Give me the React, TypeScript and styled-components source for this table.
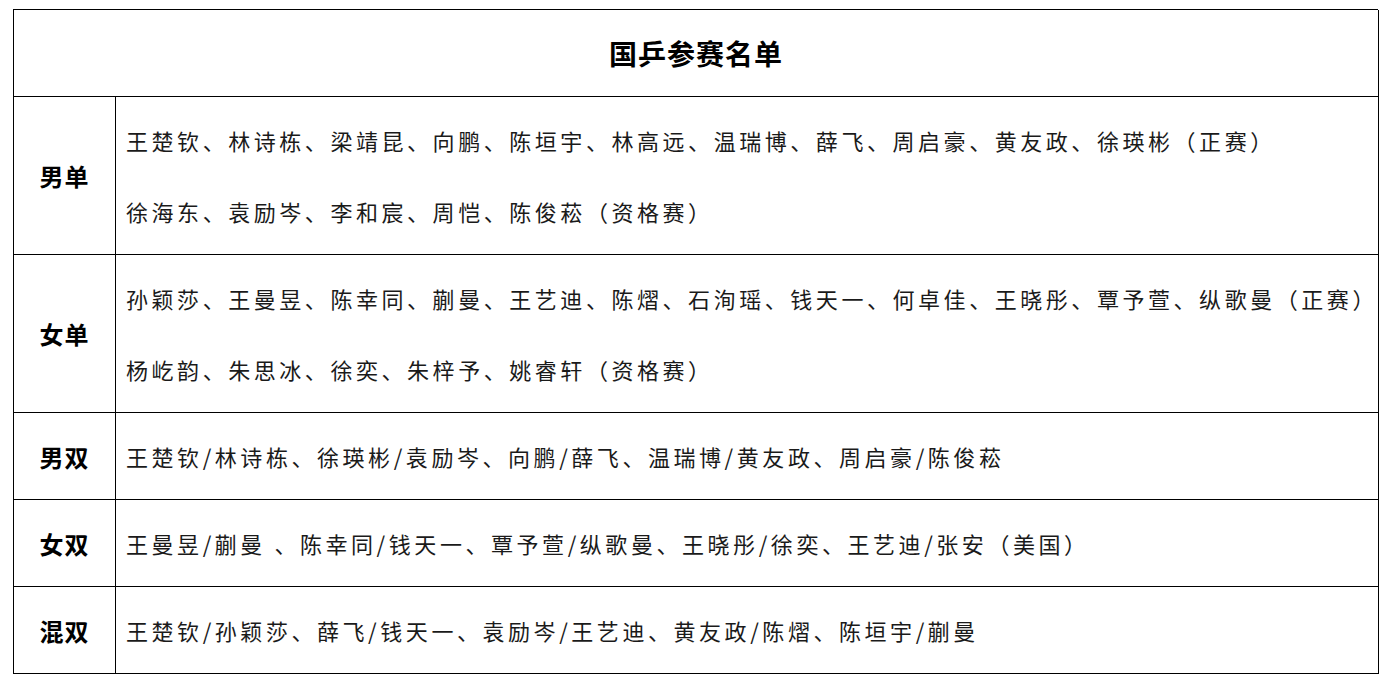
import React from 'react';
import styled, {createGlobalStyle} from 'styled-components';

const GlobalStyle = createGlobalStyle`
    html, body {
        margin: 0;
        padding: 0;
        background: #fff;
    }
    body {
        font-family: "Noto Sans CJK SC", "Liberation Serif", serif;
        color: #111;
    }
`

const Page = styled.div`
    padding: 9px 0 0 13px;
`

const Table = styled.div`
    width: 1364px;
    display: grid;
    grid-template-columns: 102px 1fr;
    border-top: 1px solid #000;
    border-left: 1px solid #000;
`

const Cell = styled.div`
    border-right: 1px solid #000;
    border-bottom: 1px solid #000;
    padding: 7.5px 0;
    line-height: 71px;
`

const TitleCell = styled(Cell)`
    grid-column: 1 / -1;
    text-align: center;
    font-size: 28px;
    font-weight: bold;
    letter-spacing: 1px;
    color: #000;
`

const LabelCell = styled(Cell)`
    display: flex;
    align-items: center;
    justify-content: center;
    font-size: 24px;
    font-weight: bold;
    letter-spacing: 1px;
    color: #000;
`

const ContentCell = styled(Cell)`
    display: flex;
    flex-direction: column;
    justify-content: center;
    padding-left: 10px;
`

const Line = styled.div`
    font-size: 22px;
    letter-spacing: 3.55px;
    white-space: nowrap;
    color: #1a1a1a;
`

interface EventRow {
    label: string,
    lines: string[]
}

const rows: EventRow[] = [
    {
        label: '男单',
        lines: [
            '王楚钦、林诗栋、梁靖昆、向鹏、陈垣宇、林高远、温瑞博、薛飞、周启豪、黄友政、徐瑛彬（正赛）',
            '徐海东、袁励岑、李和宸、周恺、陈俊菘（资格赛）',
        ],
    },
    {
        label: '女单',
        lines: [
            '孙颖莎、王曼昱、陈幸同、蒯曼、王艺迪、陈熠、石洵瑶、钱天一、何卓佳、王晓彤、覃予萱、纵歌曼（正赛）',
            '杨屹韵、朱思冰、徐奕、朱梓予、姚睿轩（资格赛）',
        ],
    },
    {
        label: '男双',
        lines: ['王楚钦/林诗栋、徐瑛彬/袁励岑、向鹏/薛飞、温瑞博/黄友政、周启豪/陈俊菘'],
    },
    {
        label: '女双',
        lines: ['王曼昱/蒯曼 、陈幸同/钱天一、覃予萱/纵歌曼、王晓彤/徐奕、王艺迪/张安（美国）'],
    },
    {
        label: '混双',
        lines: ['王楚钦/孙颖莎、薛飞/钱天一、袁励岑/王艺迪、黄友政/陈熠、陈垣宇/蒯曼'],
    },
]

function App() {
    return (
        <Page>
            <GlobalStyle />
            <Table>
                <TitleCell>国乒参赛名单</TitleCell>
                {rows.map((row) => (
                    <React.Fragment key={row.label}>
                        <LabelCell>{row.label}</LabelCell>
                        <ContentCell>
                            {row.lines.map((line) => (
                                <Line key={line}>{line}</Line>
                            ))}
                        </ContentCell>
                    </React.Fragment>
                ))}
            </Table>
        </Page>
    );
}

export default App;
